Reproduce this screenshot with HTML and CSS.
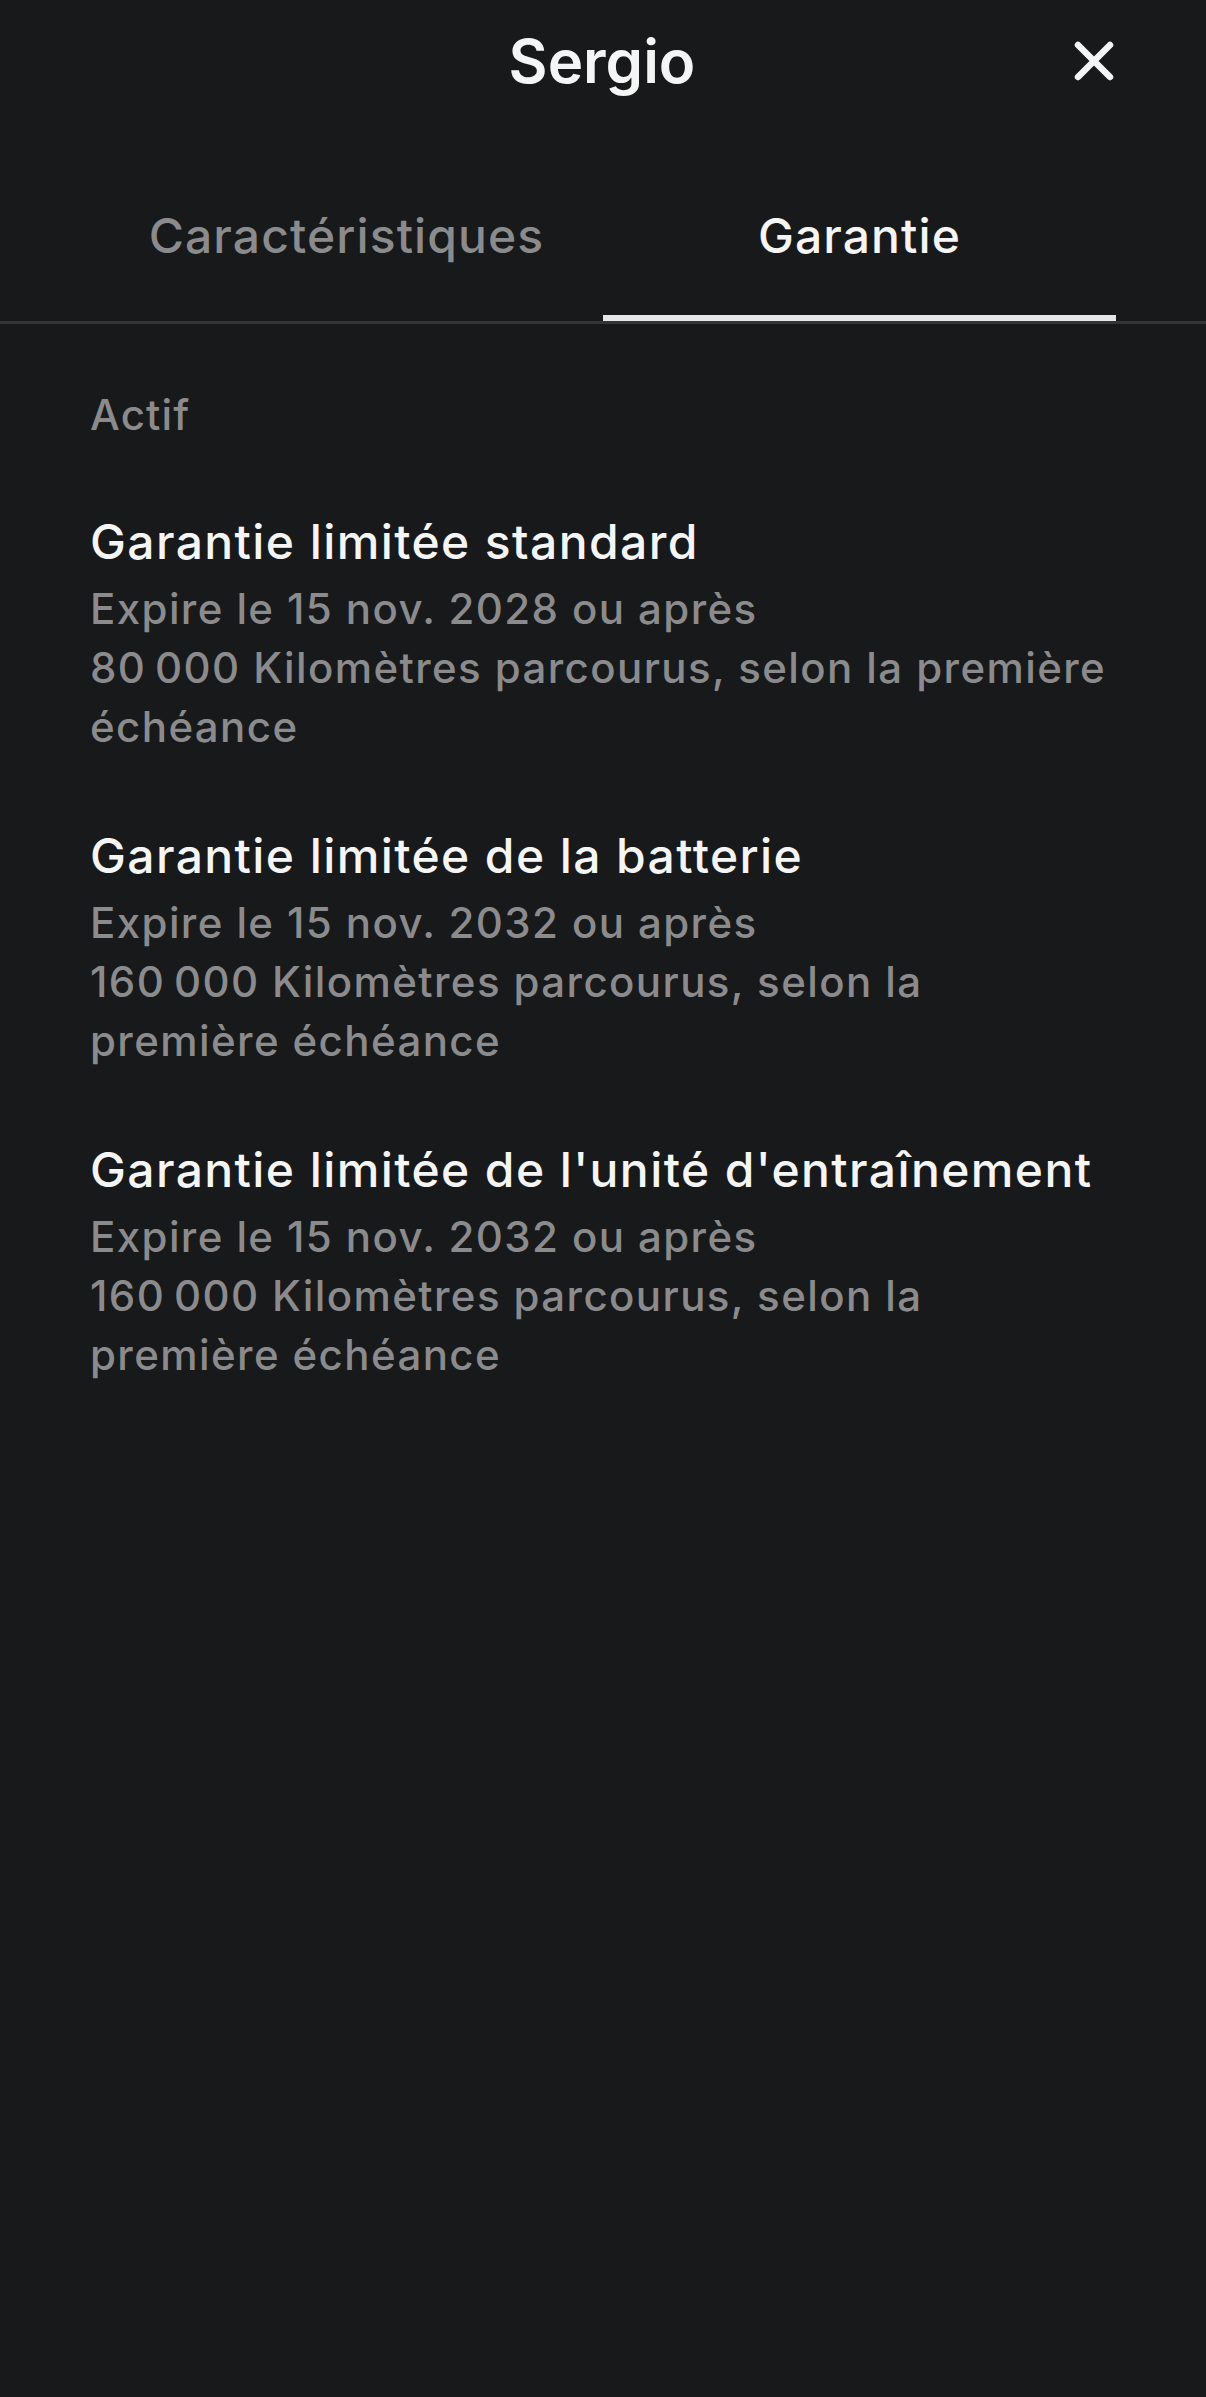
FILE: index.html
```html
<!DOCTYPE html>
<html lang="fr">
<head>
  <meta charset="UTF-8" />
  <meta name="viewport" content="width=device-width, initial-scale=1.0" />
  <title>Sergio - Garantie</title>
  <link rel="stylesheet" href="styles.css">
</head>
<body>
  <header class="topbar">
    <span></span>
    <h1>Sergio</h1>
    <button class="close" aria-label="Fermer">
      <svg width="40" height="40" viewBox="0 0 40 40">
        <path d="M4 4 L36 36 M36 4 L4 36" stroke="#f5f5f5" stroke-width="6.5" stroke-linecap="round" fill="none"/>
      </svg>
    </button>
  </header>
  <nav class="tabs">
    <a class="tab" href="#">Caractéristiques</a>
    <a class="tab active" href="#">Garantie</a>
  </nav>
  <main class="content">
    <h2 class="section">Actif</h2>
    <div class="item">
      <h3>Garantie limitée standard</h3>
      <p>Expire le 15 nov. 2028 ou après<br>80&#8239;000 Kilomètres parcourus, selon la première échéance</p>
    </div>
    <div class="item">
      <h3>Garantie limitée de la batterie</h3>
      <p>Expire le 15 nov. 2032 ou après<br>160&#8239;000 Kilomètres parcourus, selon la première échéance</p>
    </div>
    <div class="item">
      <h3>Garantie limitée de l'unité d'entraînement</h3>
      <p>Expire le 15 nov. 2032 ou après<br>160&#8239;000 Kilomètres parcourus, selon la première échéance</p>
    </div>
  </main>
</body>
</html>
```

FILE: styles.css
```css
body { margin: 0; background: #18191b; color: #f5f5f5; font-family: Inter, "Noto Sans", sans-serif; min-height: 100vh; }
.topbar { display: grid; grid-template-columns: 1fr auto 1fr; align-items: center; height: 122px; padding: 0 92px 0 90px; }
.topbar h1 { margin: 0; font-size: 60px; font-weight: 600; letter-spacing: 0; }
.close { justify-self: end; background: none; border: none; padding: 0; width: 40px; height: 40px; cursor: pointer; }
.close svg { display: block; }
.tabs { display: flex; padding: 0 90px; border-bottom: 3px solid #333436; }
.tab { flex: 1; text-align: center; font-size: 48px; font-weight: 500; letter-spacing: 1.1px; color: #8b8b8d; text-decoration: none; padding: 84px 0 50px; border-bottom: 6px solid transparent; }
.tab.active { color: #f5f5f5; border-bottom-color: #e6e6e6; }
.content { padding: 61px 90px; }
.section { margin: 0 0 64px; font-size: 42px; font-weight: 500; letter-spacing: 1.2px; color: #8b8b8d; line-height: 60px; }
.item { margin-bottom: 67px; }
.item h3 { margin: 0 0 4px; font-size: 48px; font-weight: 500; letter-spacing: 1.4px; line-height: 66px; }
.item p { margin: 0; max-width: 1020px; font-size: 42px; font-weight: 500; letter-spacing: 1.4px; line-height: 59px; color: #8b8b8d; }
```
